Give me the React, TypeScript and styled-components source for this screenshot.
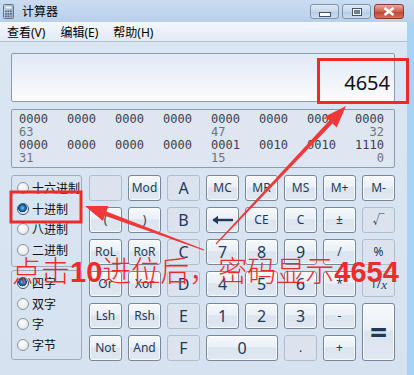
import styled, { createGlobalStyle } from "styled-components";

const GlobalStyle = createGlobalStyle`
  html, body { margin: 0; padding: 0; }
  body {
    width: 414px;
    height: 375px;
    overflow: hidden;
    font-family: "Noto Sans", "Noto Sans CJK SC", sans-serif;
  }
`;

type Key = { label: string; flat?: boolean; size?: "sm" | "lg" | "xl"; wide?: boolean; tall?: boolean };

const keys: Key[] = [
  { label: "", flat: true }, { label: "Mod" }, { label: "A", flat: true, size: "lg" }, { label: "MC" }, { label: "MR" }, { label: "MS" }, { label: "M+" }, { label: "M-" },
  { label: "(" }, { label: ")" }, { label: "B", flat: true, size: "lg" }, { label: "←" }, { label: "CE" }, { label: "C" }, { label: "±" }, { label: "√", flat: true },
  { label: "RoL" }, { label: "RoR" }, { label: "C", flat: true, size: "lg" }, { label: "7", size: "lg" }, { label: "8", size: "lg" }, { label: "9", size: "lg" }, { label: "/" }, { label: "%", flat: true },
  { label: "Or" }, { label: "Xor" }, { label: "D", flat: true, size: "lg" }, { label: "4", size: "lg" }, { label: "5", size: "lg" }, { label: "6", size: "lg" }, { label: "*" }, { label: "1/x", flat: true },
  { label: "Lsh" }, { label: "Rsh" }, { label: "E", flat: true, size: "lg" }, { label: "1", size: "lg" }, { label: "2", size: "lg" }, { label: "3", size: "lg" }, { label: "-" }, { label: "=", size: "xl", tall: true },
  { label: "Not" }, { label: "And" }, { label: "F", flat: true, size: "lg" }, { label: "0", size: "lg", wide: true }, { label: ".", flat: true }, { label: "+" },
];

const bitRows = [
  { bits: ["0000", "0000", "0000", "0000", "0000", "0000", "0000", "0000"], marks: ["63", "47", "32"] },
  { bits: ["0000", "0000", "0000", "0000", "0001", "0010", "0010", "1110"], marks: ["31", "15", "0"] },
];

const bases = ["十六进制", "十进制", "八进制", "二进制"];
const sizes = ["四字", "双字", "字", "字节"];

const arrow = (x1: number, y1: number, x2: number, y2: number) => {
  const len = Math.hypot(x2 - x1, y2 - y1);
  const ux = (x2 - x1) / len, uy = (y2 - y1) / len;
  const px = -uy, py = ux;
  const bx = x2 - ux * 22, by = y2 - uy * 22;
  const pt = (x: number, y: number) => `${x.toFixed(1)},${y.toFixed(1)}`;
  return [
    pt(x1 + px * 0.6, y1 + py * 0.6),
    pt(bx + px * 2.2, by + py * 2.2),
    pt(bx + px * 8, by + py * 8),
    pt(x2, y2),
    pt(bx - px * 8, by - py * 8),
    pt(bx - px * 2.2, by - py * 2.2),
    pt(x1 - px * 0.6, y1 - py * 0.6),
  ].join(" ");
};

const CalcIcon = () => (
  <svg width="11" height="15" viewBox="0 0 11 15">
    <defs>
      <linearGradient id="ci" x1="0" y1="0" x2="1" y2="1">
        <stop offset="0" stopColor="#dfe9f4" />
        <stop offset="1" stopColor="#8da6c4" />
      </linearGradient>
    </defs>
    <rect x="0.5" y="0.5" width="10" height="14" rx="1" fill="url(#ci)" stroke="#5d7593" />
    <rect x="2" y="2" width="7" height="3" fill="#f4f8fc" stroke="#7b90aa" strokeWidth="0.6" />
    {[0, 1, 2].map((r) =>
      [0, 1, 2].map((c) => (
        <rect key={`${r}${c}`} x={2 + c * 2.5} y={6.5 + r * 2.5} width="1.8" height="1.6" fill={c === 2 && r === 2 ? "#e07a2a" : "#4f6988"} />
      ))
    )}
  </svg>
);

const BackArrow = () => (
  <svg width="22" height="10" viewBox="0 0 22 10">
    <path d="M1 5 H21" stroke="#1e395b" strokeWidth="2.4" />
    <path d="M0.5 5 L6 0.8 L6 9.2 Z" fill="#1e395b" />
  </svg>
);

export default function App() {
  return (
    <>
      <GlobalStyle />
      <Frame>
        <TitleBar>
          <CalcIcon />
          <Title>计算器</Title>
          <WinButtons>
            <WinButton>
              <MinGlyph />
            </WinButton>
            <WinButton>
              <MaxGlyph />
            </WinButton>
            <WinButton $close>
              <svg width="12" height="9" viewBox="0 0 12 9">
                <path d="M1.5 1 L10.5 8 M10.5 1 L1.5 8" stroke="#fff" strokeWidth="2.6" />
              </svg>
            </WinButton>
          </WinButtons>
        </TitleBar>
        <Client>
          <MenuBar>
            <MenuItem>查看(V)</MenuItem>
            <MenuItem>编辑(E)</MenuItem>
            <MenuItem>帮助(H)</MenuItem>
          </MenuBar>
          <Body>
            <Display>4654</Display>
            <BitPanel>
              {bitRows.map((row, i) => (
                <BitBlock key={i}>
                  {row.bits.map((b, j) => (
                    <Bits key={j}>{b}</Bits>
                  ))}
                  <Mark $col={1}>{row.marks[0]}</Mark>
                  <Mark $col={5}>{row.marks[1]}</Mark>
                  <Mark $col={8} $right>{row.marks[2]}</Mark>
                </BitBlock>
              ))}
            </BitPanel>
            <Keypad>
              <Options>
                <Group $h={92}>
                  {bases.map((b) => (
                    <RadioRow key={b}>
                      <Radio $on={b === "十进制"} />
                      {b}
                    </RadioRow>
                  ))}
                </Group>
                <Group $h={90}>
                  {sizes.map((s) => (
                    <RadioRow key={s}>
                      <Radio $on={s === "四字"} />
                      {s}
                    </RadioRow>
                  ))}
                </Group>
              </Options>
              <Keys>
                {keys.map((k, i) => (
                  <KeyButton key={i} $flat={k.flat} $size={k.size} $wide={k.wide} $tall={k.tall}>
                    {k.label === "←" ? <BackArrow /> : k.label === "1/x" ? <>1/<i>x</i></> : k.label}
                  </KeyButton>
                ))}
              </Keys>
            </Keypad>
          </Body>
        </Client>
        <Marks width="414" height="375" viewBox="0 0 414 375">
          <rect x="318.5" y="59.5" width="89" height="43" fill="none" stroke="#ee2b2b" strokeWidth="3" />
          <rect x="11" y="192" width="70" height="30" fill="none" stroke="#ee2b2b" strokeWidth="3" />
          <polygon points={arrow(216, 244, 346, 106)} fill="#f03838" />
          <polygon points={arrow(204, 250, 85, 206)} fill="#f03838" />
        </Marks>
        <Note>
          点击<Num>10</Num>进位后，密码显示<Num>4654</Num>
        </Note>
      </Frame>
    </>
  );
}

const Frame = styled.div`
  position: relative;
  width: 414px;
  height: 375px;
  display: flex;
  flex-direction: column;
  background: linear-gradient(90deg, #c3d8ee 0%, #bcd4ee 80%, #a9d3f3 100%);
  overflow: hidden;
`;

const TitleBar = styled.div`
  height: 22px;
  flex-shrink: 0;
  display: flex;
  align-items: center;
  padding-left: 3px;
  background: linear-gradient(#c9dcf0, #b9d0ea);
`;

const Title = styled.span`
  margin-left: 8px;
  font-size: 12px;
  color: #000;
`;

const WinButtons = styled.div`
  margin-left: auto;
  align-self: flex-start;
  margin-top: 4px;
  margin-right: 10px;
  display: flex;
  gap: 3px;
`;

const WinButton = styled.div<{ $close?: boolean }>`
  width: ${(p) => (p.$close ? 30 : 29)}px;
  height: 15px;
  box-sizing: border-box;
  border: 1px solid ${(p) => (p.$close ? "#8a3a33" : "#7f93ad")};
  border-radius: 3px;
  display: flex;
  align-items: center;
  justify-content: center;
  background: ${(p) =>
    p.$close
      ? "linear-gradient(#e9a99a, #d0604f 50%, #c0402f 51%, #d4705c)"
      : "linear-gradient(#dfe9f5, #c6d7eb 50%, #b5cbe4 51%, #c9dbef)"};
`;

const MinGlyph = styled.div`
  width: 10px;
  height: 3px;
  margin-top: 5px;
  background: #fff;
  border: 1px solid #44546b;
`;

const MaxGlyph = styled.div`
  width: 8px;
  height: 6px;
  border: 1px solid #44546b;
  background: #eef3f9;
  box-shadow: inset 0 0 0 1px #fff, inset 0 0 0 3px #6d7f98;
`;

const Client = styled.div`
  flex: 1;
  margin-right: 7px;
  display: flex;
  flex-direction: column;
  background: linear-gradient(#dbe6f3, #d6e2f0);
`;

const MenuBar = styled.div`
  height: 19px;
  display: flex;
  align-items: center;
  gap: 15px;
  padding-left: 7px;
  background: linear-gradient(#f4f8fc, #e2eaf5);
  border-bottom: 1px solid #b4c2d4;
`;

const MenuItem = styled.span`
  font-size: 12px;
  color: #000;
`;

const Body = styled.div`
  padding: 11px 12px 0 11px;
  display: flex;
  flex-direction: column;
`;

const Display = styled.div`
  height: 49px;
  box-sizing: border-box;
  border: 1px solid #8e9bad;
  border-radius: 2px;
  background: linear-gradient(#e0e9f5, #fbfcfe);
  display: flex;
  align-items: flex-end;
  justify-content: flex-end;
  padding: 0 4px 6px 0;
  font-size: 20px;
  line-height: 24px;
  color: #111;
`;

const BitPanel = styled.div`
  margin-top: 7px;
  height: 59px;
  box-sizing: border-box;
  border: 1px solid #8e9bad;
  border-radius: 2px;
  background: #dde6f1;
  padding: 3px 0 0 7px;
`;

const BitBlock = styled.div`
  display: grid;
  grid-template-columns: repeat(8, 29px);
  column-gap: 19px;
  font-family: "DejaVu Sans Mono", monospace;
  font-size: 12px;
  line-height: 13px;
`;

const Bits = styled.span`
  color: #3a3f48;
  grid-row: 1;
`;

const Mark = styled.span<{ $col: number; $right?: boolean }>`
  grid-row: 2;
  grid-column: ${(p) => p.$col};
  text-align: ${(p) => (p.$right ? "right" : "left")};
  color: #6e747c;
`;

const Keypad = styled.div`
  margin-top: 7px;
  display: flex;
  gap: 7px;
`;

const Options = styled.div`
  width: 72px;
  display: flex;
  flex-direction: column;
  gap: 3px;
`;

const Group = styled.div<{ $h: number }>`
  height: ${(p) => p.$h}px;
  box-sizing: border-box;
  border: 1px solid #a1acbb;
  border-radius: 3px;
  padding: 2px 0 0 5px;
`;

const RadioRow = styled.div`
  height: 20.5px;
  display: flex;
  align-items: center;
  gap: 3px;
  font-size: 12px;
  color: #111;
`;

const Radio = styled.span<{ $on?: boolean }>`
  width: 12px;
  height: 12px;
  box-sizing: border-box;
  border-radius: 50%;
  border: 1px solid ${(p) => (p.$on ? "#3c4f66" : "#8f9499")};
  background: ${(p) =>
    p.$on
      ? "radial-gradient(circle at 45% 40%, #6fd0ff 0, #1d84c9 2px, #0c3f74 4px, #e9eef4 4.6px, #f7f9fb)"
      : "radial-gradient(circle at 40% 35%, #ffffff, #dcdfe3)"};
`;

const Keys = styled.div`
  display: grid;
  grid-template-columns: repeat(8, 33px);
  grid-auto-rows: 26px;
  gap: 6px;
`;

const KeyButton = styled.div<{ $flat?: boolean; $size?: "sm" | "lg" | "xl"; $wide?: boolean; $tall?: boolean }>`
  box-sizing: border-box;
  grid-column: ${(p) => (p.$wide ? "span 2" : "auto")};
  grid-row: ${(p) => (p.$tall ? "span 2" : "auto")};
  border-radius: 3px;
  border: 1px solid ${(p) => (p.$flat ? "#b3bdca" : "#77869b")};
  background: ${(p) =>
    p.$flat
      ? "#dae3ee"
      : "linear-gradient(#f6f9fc, #eaf0f7 45%, #dbe4ef 50%, #e0e8f2)"};
  box-shadow: ${(p) => (p.$flat ? "none" : "inset 0 0 0 1px rgba(255,255,255,0.7)")};
  display: flex;
  align-items: center;
  justify-content: center;
  color: #1e395b;
  font-size: ${(p) => (p.$size === "xl" ? 30 : p.$size === "lg" ? 16 : 12)}px;
  font-weight: ${(p) => (p.$size === "xl" ? 700 : 400)};
  line-height: 1;

  i {
    font-family: "Liberation Serif", serif;
    font-size: 13px;
  }
`;

const Marks = styled.svg`
  position: absolute;
  left: 0;
  top: 0;
  pointer-events: none;
`;

const Note = styled.div`
  position: absolute;
  left: 12px;
  top: 254px;
  font-family: "Noto Sans CJK SC", sans-serif;
  font-size: 29px;
  font-weight: 300;
  line-height: 30px;
  color: #ee2b2b;
  white-space: nowrap;
`;

const Num = styled.span`
  font-family: "Liberation Sans", sans-serif;
  font-weight: 700;
`;
